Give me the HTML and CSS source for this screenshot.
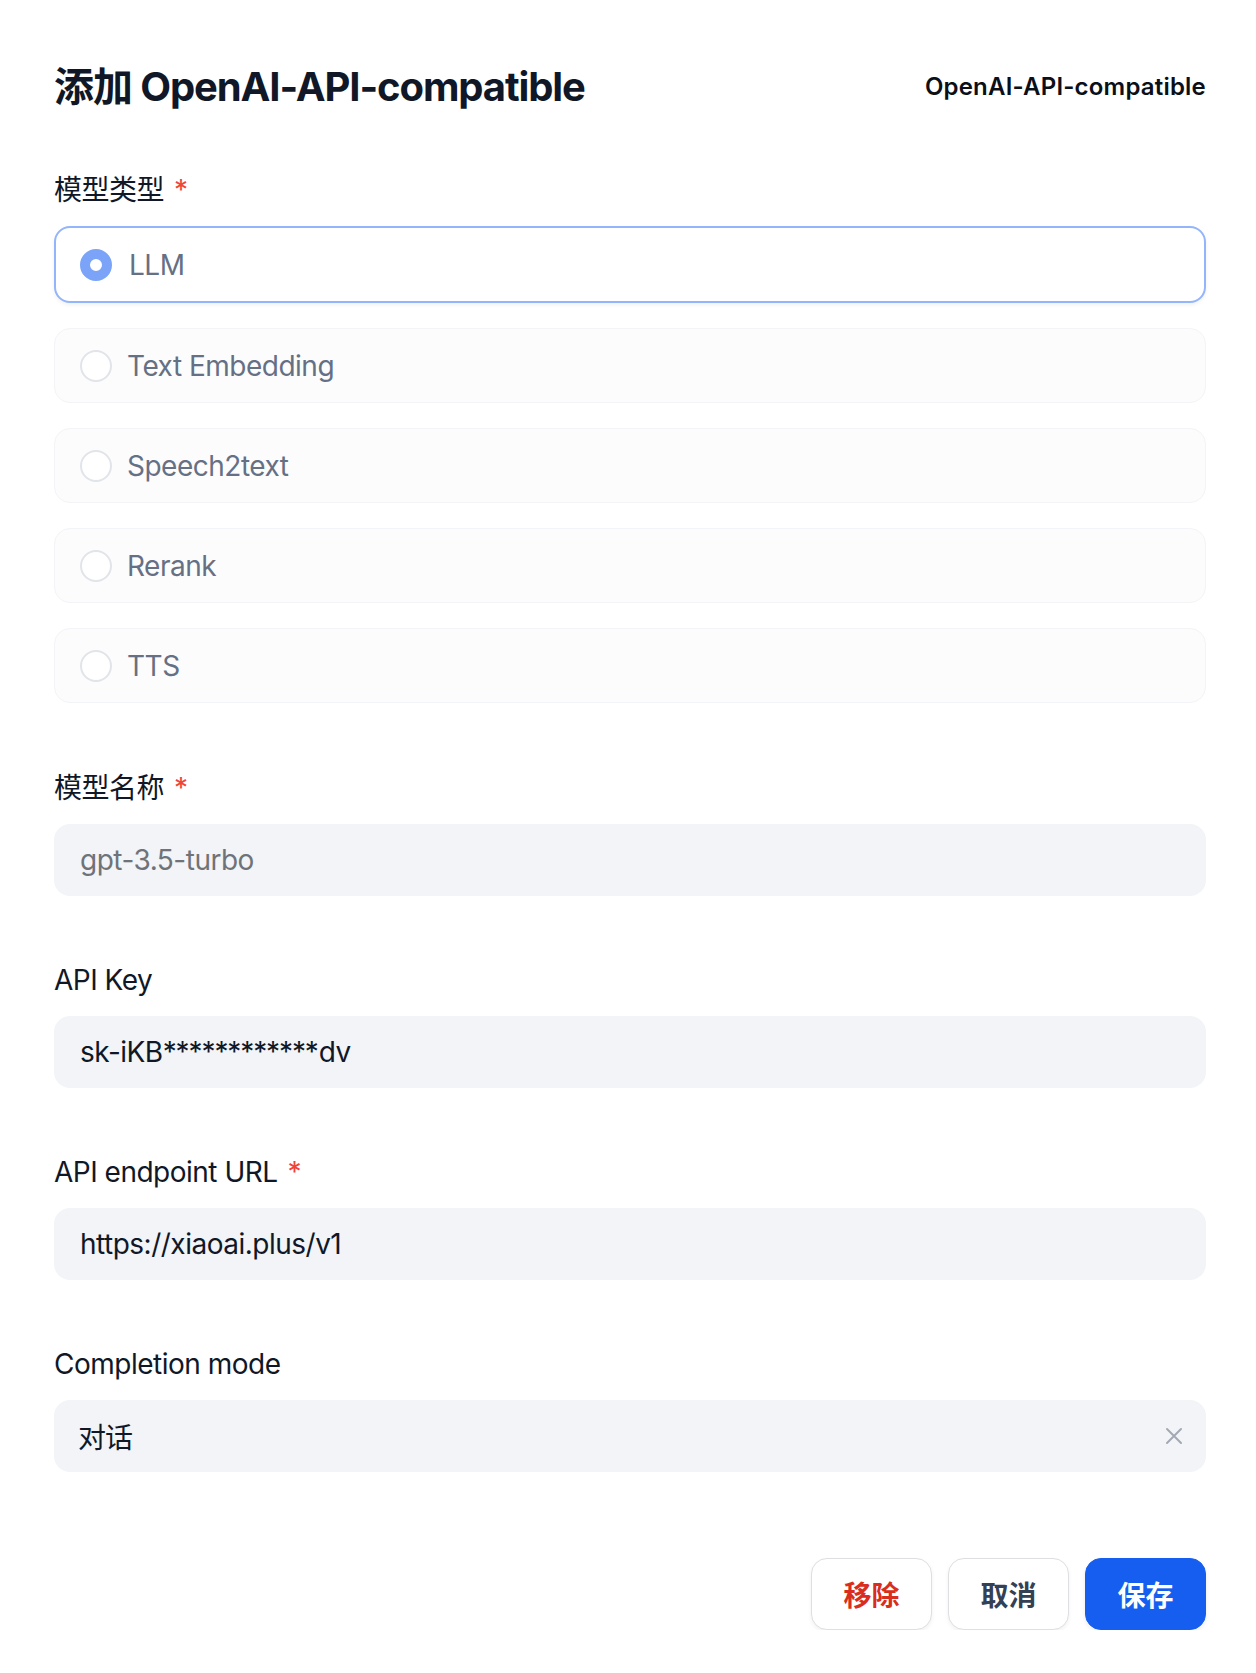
FILE: index.html
```html
<!DOCTYPE html>
<html lang="zh-CN">
<head>
<meta charset="utf-8">
<title>添加 OpenAI-API-compatible</title>
<link rel="stylesheet" href="styles.css">
</head>
<body>
<div class="modal">
  <header class="head">
    <h1 class="title">添加 OpenAI-API-compatible</h1>
    <div class="provider">OpenAI-API-compatible</div>
  </header>

  <section class="field field-first">
    <div class="label">模型类型<span class="req">*</span></div>
    <div class="options">
      <div class="option selected"><span class="radio on"></span><span class="opt-text">LLM</span></div>
      <div class="option"><span class="radio"></span><span class="opt-text">Text Embedding</span></div>
      <div class="option"><span class="radio"></span><span class="opt-text">Speech2text</span></div>
      <div class="option"><span class="radio"></span><span class="opt-text">Rerank</span></div>
      <div class="option"><span class="radio"></span><span class="opt-text">TTS</span></div>
    </div>
  </section>

  <section class="field field-after-options">
    <div class="label">模型名称<span class="req">*</span></div>
    <div class="input placeholder">gpt-3.5-turbo</div>
  </section>

  <section class="field">
    <div class="label">API Key</div>
    <div class="input"><span>sk-iKB</span><span class="stars">************</span><span>dv</span></div>
  </section>

  <section class="field">
    <div class="label">API endpoint URL<span class="req">*</span></div>
    <div class="input">https://xiaoai.plus/v1</div>
  </section>

  <section class="field">
    <div class="label">Completion mode</div>
    <div class="input select">
      <span class="select-value">对话</span>
      <svg class="clear" width="18" height="18" viewBox="0 0 18 18" fill="none">
        <path d="M2 2 L16 16 M16 2 L2 16" stroke="#a3a9b4" stroke-width="2" stroke-linecap="round"/>
      </svg>
    </div>
  </section>

  <footer class="actions">
    <button class="btn btn-danger">移除</button>
    <button class="btn btn-default">取消</button>
    <button class="btn btn-primary">保存</button>
  </footer>
</div>
</body>
</html>
```

FILE: styles.css
```css
* {
  box-sizing: border-box;
}

html, body {
  margin: 0;
  padding: 0;
  background: #ffffff;
}

body {
  font-family: Inter, "Noto Sans CJK SC", "Noto Sans", sans-serif;
  color: #101828;
}

.modal {
  width: 1256px;
  padding: 63px 50px 0 54px;
}

.head {
  display: flex;
  align-items: center;
  justify-content: space-between;
  height: 48px;
}

.title {
  margin: 0;
  font-size: 40px;
  line-height: 48px;
  font-weight: 700;
  letter-spacing: -1.1px;
  color: #101828;
}

.provider {
  font-size: 24px;
  line-height: 32px;
  font-weight: 600;
  color: #0b0f17;
  letter-spacing: 0.2px;
}

.field {
  margin-top: 64px;
}

.field-first {
  margin-top: 59px;
}

.field-after-options {
  margin-top: 65px;
}

.label {
  font-size: 28px;
  line-height: 40px;
  height: 40px;
  font-weight: 400;
  letter-spacing: -0.5px;
  color: #101828;
  margin-bottom: 16px;
}

.req {
  color: #f04438;
  margin-left: 10px;
  font-size: 28px;
}

.options {
  display: flex;
  flex-direction: column;
  gap: 25px;
}

.option {
  display: flex;
  align-items: center;
  gap: 15px;
  height: 75px;
  padding-left: 25px;
  border: 1px solid #f2f4f7;
  border-radius: 16px;
  background: #fcfcfd;
}

.option.selected {
  height: 77px;
  padding-left: 24px;
  gap: 17px;
  border: 2px solid #93b5fb;
  background: #ffffff;
  box-shadow: 0 2px 4px rgba(16, 24, 40, 0.06);
}

.radio {
  width: 32px;
  height: 32px;
  flex: none;
  border-radius: 50%;
  border: 2px solid #e1e4e9;
  background: #ffffff;
}

.radio.on {
  border: 10px solid #7ba4f9;
  background: #ffffff;
}

.opt-text {
  font-size: 28px;
  letter-spacing: -0.5px;
  color: #667085;
}

.input {
  display: flex;
  align-items: center;
  height: 72px;
  padding: 0 26px 0 26px;
  border-radius: 16px;
  background: #f2f4f7;
  font-size: 28px;
  letter-spacing: -0.5px;
  color: #101828;
}

.stars {
  letter-spacing: -1.1px;
  margin-right: 1px;
}

.input.placeholder {
  color: #6f7378;
}

.select {
  justify-content: space-between;
  padding-left: 24px;
  padding-right: 23px;
}

.select-value {
  letter-spacing: -1px;
}

.clear {
  flex: none;
}

.actions {
  display: flex;
  justify-content: flex-end;
  gap: 16px;
  margin-top: 86px;
}

.btn {
  width: 121px;
  height: 72px;
  border-radius: 16px;
  font-family: Inter, "Noto Sans CJK SC", sans-serif;
  font-size: 28px;
  font-weight: 700;
  cursor: pointer;
}

.btn-danger {
  background: #ffffff;
  border: 1px solid #dedfe2;
  color: #d92d20;
  box-shadow: 0 2px 4px rgba(16, 24, 40, 0.06);
}

.btn-default {
  background: #ffffff;
  border: 1px solid #dedfe2;
  color: #344054;
  box-shadow: 0 2px 4px rgba(16, 24, 40, 0.06);
}

.btn-primary {
  background: #155eef;
  border: 1px solid #155eef;
  color: #ffffff;
  box-shadow: 0 2px 4px rgba(16, 24, 40, 0.08);
}
```
